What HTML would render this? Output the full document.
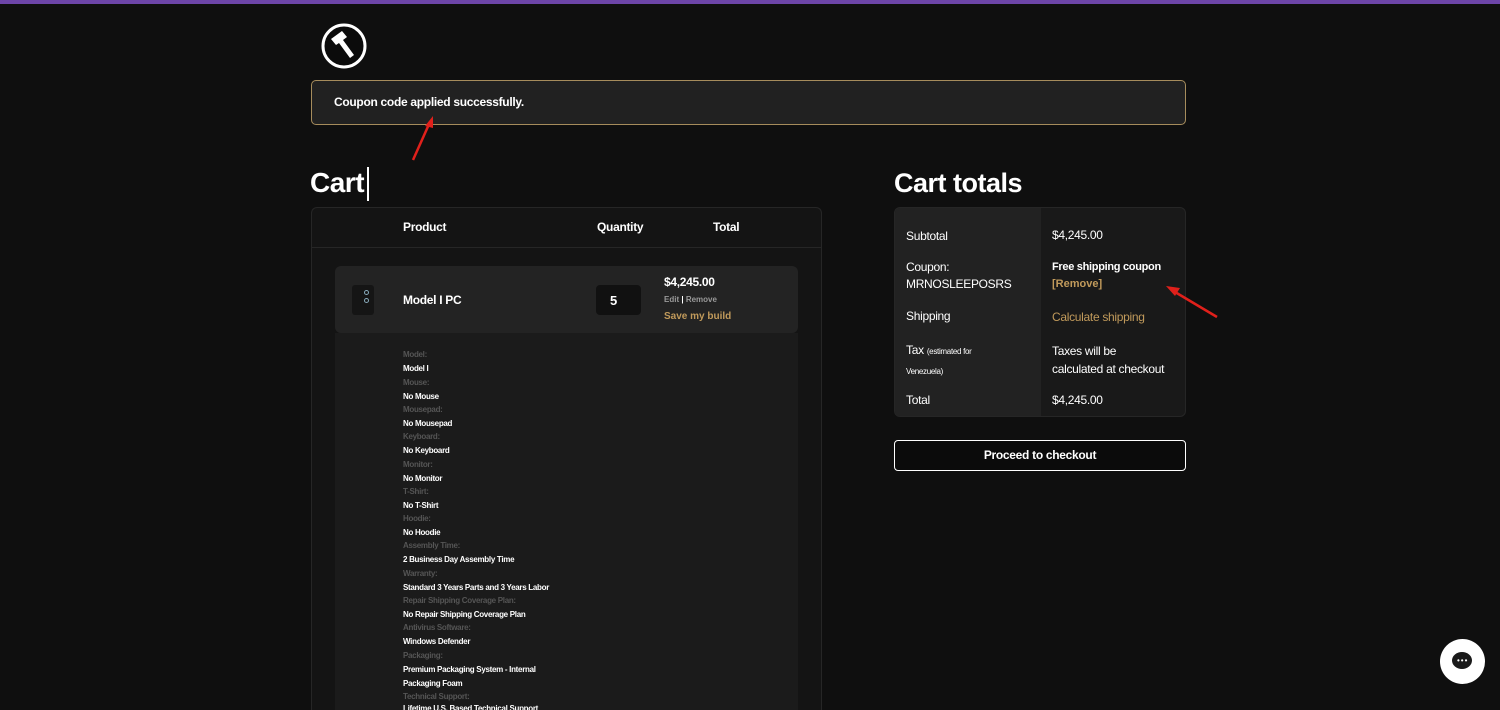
<!DOCTYPE html>
<html style="width:1500px;height:710px;overflow:hidden"><head><meta charset="utf-8"><style>
*{margin:0;padding:0;box-sizing:border-box}
body{width:1500px;height:710px;overflow:hidden;background:#0f0f0f;font-family:"Liberation Sans",sans-serif;color:#fff;position:relative}
.a{position:absolute}
.b{font-weight:bold}
.meta div{position:absolute;left:403px;font-size:8px;font-weight:bold;letter-spacing:-0.3px}
.l{color:#555}
.gold{color:#c19a5b}
</style></head><body>
<div class="a" style="left:0;top:0;width:1500px;height:4px;background:#6d45a8"></div>
<svg class="a" style="left:320px;top:22px" width="48" height="48" viewBox="0 0 48 48">
<circle cx="24" cy="24" r="21" fill="#0b0b0b" stroke="#fff" stroke-width="3"/>
<path d="M11 17 L22 9 L27 15 L23 18 L34 33 L30 36 L19 21 L16 23 Z" fill="#fff"/>
</svg>
<div class="a" style="left:311px;top:80px;width:875px;height:45px;background:#212121;border:1px solid #a68c5c;border-radius:5px"></div>
<div class="a b" style="left:334px;top:95px;font-size:12px;letter-spacing:-0.3px">Coupon code applied successfully.</div>
<svg class="a" style="left:400px;top:110px" width="40" height="60"><path d="M13 50 L30 12" stroke="#e0201b" stroke-width="2.5"/><path d="M33 6 L25 16 L33 18 Z" fill="#e0201b"/></svg>
<div class="a b" style="left:310px;top:167px;font-size:28px;letter-spacing:-0.5px">Cart</div>
<div class="a" style="left:367px;top:167px;width:1.5px;height:34px;background:#fff"></div>
<div class="a" style="left:311px;top:207px;width:511px;height:503px;background:#141414;border:1px solid #262626;border-bottom:none;border-radius:6px 6px 0 0"></div>
<div class="a" style="left:312px;top:247px;width:509px;height:1px;background:#262626"></div>
<div class="a b" style="left:403px;top:220px;font-size:12px;letter-spacing:-0.3px">Product</div>
<div class="a b" style="left:597px;top:220px;font-size:12px;letter-spacing:-0.3px">Quantity</div>
<div class="a b" style="left:713px;top:220px;font-size:12px;letter-spacing:-0.3px">Total</div>
<div class="a" style="left:335px;top:266px;width:463px;height:67px;background:#232323;border-radius:6px"></div>
<div class="a" style="left:335px;top:333px;width:463px;height:377px;background:#1b1b1b"></div>
<div class="a" style="left:352px;top:285px;width:22px;height:30px;background:#151515;border-radius:3px"></div>
<div class="a" style="left:364px;top:290px;width:5px;height:5px;border-radius:50%;border:1px solid #8ab"></div>
<div class="a" style="left:364px;top:298px;width:5px;height:5px;border-radius:50%;border:1px solid #8ab"></div>
<div class="a b" style="left:403px;top:293px;font-size:12px;letter-spacing:-0.3px">Model I PC</div>
<div class="a" style="left:596px;top:285px;width:45px;height:30px;background:#111;border-radius:4px"></div>
<div class="a b" style="left:610px;top:293px;font-size:13px">5</div>
<div class="a b" style="left:664px;top:275px;font-size:12px;letter-spacing:-0.3px">$4,245.00</div>
<div class="a b" style="left:664px;top:295px;font-size:8px;color:#999">Edit <span style="color:#fff">|</span> Remove</div>
<div class="a b gold" style="left:664px;top:311px;font-size:10px">Save my build</div>
<div class="meta">
<div class="l" style="top:350px">Model:</div><div style="top:364px">Model I</div>
<div class="l" style="top:378px">Mouse:</div><div style="top:392px">No Mouse</div>
<div class="l" style="top:405px">Mousepad:</div><div style="top:419px">No Mousepad</div>
<div class="l" style="top:432px">Keyboard:</div><div style="top:446px">No Keyboard</div>
<div class="l" style="top:460px">Monitor:</div><div style="top:474px">No Monitor</div>
<div class="l" style="top:487px">T-Shirt:</div><div style="top:501px">No T-Shirt</div>
<div class="l" style="top:514px">Hoodie:</div><div style="top:528px">No Hoodie</div>
<div class="l" style="top:541px">Assembly Time:</div><div style="top:555px">2 Business Day Assembly Time</div>
<div class="l" style="top:569px">Warranty:</div><div style="top:583px">Standard 3 Years Parts and 3 Years Labor</div>
<div class="l" style="top:596px">Repair Shipping Coverage Plan:</div><div style="top:610px">No Repair Shipping Coverage Plan</div>
<div class="l" style="top:623px">Antivirus Software:</div><div style="top:637px">Windows Defender</div>
<div class="l" style="top:651px">Packaging:</div><div style="top:665px">Premium Packaging System - Internal</div><div style="top:679px">Packaging Foam</div>
<div class="l" style="top:692px">Technical Support:</div><div style="top:704px">Lifetime U.S. Based Technical Support</div>
</div>
<div class="a b" style="left:894px;top:168px;font-size:27px;letter-spacing:-0.5px">Cart totals</div>
<div class="a" style="left:894px;top:207px;width:292px;height:210px;background:#191919;border:1px solid #262626;border-radius:6px;overflow:hidden"><div style="width:146px;height:100%;background:#222"></div></div>
<div class="a" style="left:906px;top:228px;font-size:12px;letter-spacing:-0.3px;line-height:16px">Subtotal</div>
<div class="a" style="left:906px;top:259px;font-size:12px;letter-spacing:-0.3px;line-height:17px">Coupon:<br>MRNOSLEEPOSRS</div>
<div class="a" style="left:906px;top:309px;font-size:12px;letter-spacing:-0.3px">Shipping</div>
<div class="a" style="left:906px;top:341px;font-size:12px;letter-spacing:-0.3px;line-height:19px">Tax <span style="font-size:8px">(estimated for<br>Venezuela)</span></div>
<div class="a" style="left:906px;top:393px;font-size:12px;letter-spacing:-0.3px">Total</div>
<div class="a" style="left:1052px;top:228px;font-size:12px;letter-spacing:-0.3px">$4,245.00</div>
<div class="a b" style="left:1052px;top:261px;font-size:11px;letter-spacing:-0.3px">Free shipping coupon</div>
<div class="a b gold" style="left:1052px;top:278px;font-size:11px">[Remove]</div>
<div class="a gold" style="left:1052px;top:310px;font-size:12px;letter-spacing:-0.3px">Calculate shipping</div>
<div class="a" style="left:1052px;top:342px;font-size:12px;letter-spacing:-0.3px;line-height:18px">Taxes will be<br>calculated at checkout</div>
<div class="a" style="left:1052px;top:393px;font-size:12px;letter-spacing:-0.3px">$4,245.00</div>
<svg class="a" style="left:1160px;top:280px" width="65" height="45"><path d="M57 37 L15 12" stroke="#e0201b" stroke-width="2.5"/><path d="M6 6 L20 8 L15 16 Z" fill="#e0201b"/></svg>
<div class="a b" style="left:894px;top:440px;width:292px;height:31px;border:1.5px solid #fff;border-radius:4px;background:#0b0b0b;text-align:center;line-height:28px;font-size:12px;letter-spacing:-0.3px">Proceed to checkout</div>
<div class="a" style="left:1440px;top:639px;width:45px;height:45px;border-radius:50%;background:#fff"></div>
<div class="a" style="left:1452px;top:652px;width:20px;height:17px;border-radius:50%;background:#1a1a1a"></div>
<div class="a" style="left:1457px;top:659px;font-size:8px;color:#fff;letter-spacing:1px;line-height:4px">•••</div>
</body></html>
